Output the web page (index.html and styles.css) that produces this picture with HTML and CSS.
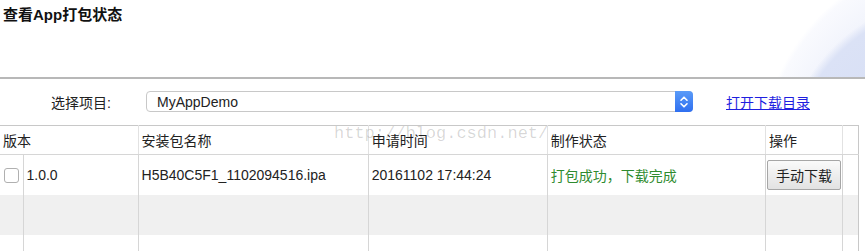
FILE: index.html
```html
<!DOCTYPE html>
<html lang="zh-CN">
<head>
<meta charset="UTF-8" />
<title>查看App打包状态</title>
<link rel="stylesheet" href="styles.css">
</head>
<body>

<div class="header">
  <h1 class="title">查看App打包状态</h1>
</div>

<div class="picker">
  <span class="picker-label">选择项目:</span>
  <div class="select">
    <span class="select-value">MyAppDemo</span>
    <span class="stepper">
      <svg width="10" height="14" viewBox="0 0 10 14">
        <path d="M2 5.2 L5 2.2 L8 5.2" fill="none" stroke="#fff" stroke-width="1.6" stroke-linecap="round" stroke-linejoin="round"/>
        <path d="M2 8.8 L5 11.8 L8 8.8" fill="none" stroke="#fff" stroke-width="1.6" stroke-linecap="round" stroke-linejoin="round"/>
      </svg>
    </span>
  </div>
  <a class="open-dir" href="#">打开下载目录</a>
</div>

<div class="table-wrap">
  <table class="builds">
    <colgroup>
      <col class="c-check"><col class="c-ver"><col class="c-name"><col class="c-time"><col class="c-state"><col class="c-op"><col class="c-end">
    </colgroup>
    <thead>
      <tr>
        <th colspan="2" class="first">版本</th>
        <th>安装包名称</th>
        <th>申请时间</th>
        <th>制作状态</th>
        <th>操作</th>
        <th></th>
      </tr>
    </thead>
    <tbody>
      <tr>
        <td class="first"><span class="checkbox"></span></td>
        <td>1.0.0</td>
        <td>H5B40C5F1_1102094516.ipa</td>
        <td>20161102 17:44:24</td>
        <td class="ok">打包成功，下载完成</td>
        <td class="op"><button class="btn">手动下载</button></td>
        <td></td>
      </tr>
      <tr class="alt">
        <td class="first"></td><td></td><td></td><td></td><td></td><td></td><td></td>
      </tr>
      <tr>
        <td class="first"></td><td></td><td></td><td></td><td></td><td></td><td></td>
      </tr>
    </tbody>
  </table>
  <span class="watermark">http://blog.csdn.net/</span>
</div>

</body>
</html>
```

FILE: styles.css
```css
:root {
  --text: #222;
  --line: #d6d6d6;
  --alt-row: #f0f0f0;
  --link: #1f1fe0;
  --ok: #2f8b2f;
}
body {
  margin: 0;
  font-family: "Liberation Sans", "Noto Sans CJK SC", sans-serif;
  font-size: 14px;
  color: var(--text);
  background: #fff;
  overflow: hidden;
}
.header {
  height: 79px;
  box-sizing: border-box;
  padding: 6px 3px 0;
  border-bottom: 2px solid #b8b8b8;
  background:
    radial-gradient(circle 174px at 956px 170px, #d2dbf3 0, #dbe2f6 165px, rgba(219,226,246,0) 174px),
    radial-gradient(circle 205px at 965px 160px, #eef1fb 150px, #f9fafe 200px, rgba(255,255,255,0) 205px);
}
.title {
  margin: 0;
  font-size: 15px;
  line-height: 18px;
  font-weight: bold;
  color: #111;
}
.picker {
  display: flex;
  align-items: center;
  height: 21px;
  margin-top: 12px;
  padding-left: 51px;
}
.picker-label {
  width: 95px;
}
.select {
  display: flex;
  align-items: center;
  width: 547px;
  height: 21px;
  box-sizing: border-box;
  border: 1px solid #c8c8c8;
  border-radius: 4px;
  background: #fff;
}
.select-value {
  flex: 1;
  padding-left: 10px;
}
.stepper {
  display: flex;
  align-items: center;
  justify-content: center;
  width: 18px;
  height: 21px;
  margin-right: -1px;
  border-radius: 0 4px 4px 0;
  background: linear-gradient(#5a9bf8, #2f6ff0);
}
.open-dir {
  margin-left: 33px;
  color: var(--link);
  text-decoration: underline;
}
.table-wrap {
  position: relative;
  margin-top: 13px;
}
.builds {
  table-layout: fixed;
  border-collapse: collapse;
  width: 859px;
  border-top: 1px solid #c8c8c8;
  border-right: 1px solid #c8c8c8;
}
.c-check { width: 23px; }
.c-ver { width: 115px; }
.c-name { width: 230px; }
.c-time { width: 179px; }
.c-state { width: 218px; }
.c-op { width: 77px; }
.c-end { width: 16px; }
.builds th {
  height: 28px;
  padding: 0 0 0 3px;
  text-align: left;
  font-weight: normal;
  border-left: 1px solid #e2e2e2;
  border-bottom: 1px solid var(--line);
}
.builds td {
  height: 40px;
  padding: 0 0 0 3px;
  border-left: 1px solid var(--line);
  white-space: nowrap;
}
.builds .first {
  border-left: none;
}
.builds .alt td {
  background: var(--alt-row);
}
.builds td.ok {
  color: var(--ok);
}
.builds td.op {
  padding-left: 1px;
}
.checkbox {
  display: block;
  width: 13px;
  height: 13px;
  margin-left: 1px;
  border: 1px solid #b0b0b0;
  border-radius: 3px;
  background: #fff;
}
.btn {
  width: 74px;
  height: 30px;
  padding: 0;
  font-family: "Liberation Sans", "Noto Sans CJK SC", sans-serif;
  font-size: 14px;
  color: #222;
  border: 1px solid #a6a6a6;
  border-radius: 2px;
  background: linear-gradient(#fafafa, #e2e2e2);
}
.watermark {
  position: absolute;
  left: 334px;
  top: -1px;
  font-family: "Liberation Mono", monospace;
  font-size: 17px;
  color: rgba(0, 0, 0, 0.16);
  pointer-events: none;
}
```
